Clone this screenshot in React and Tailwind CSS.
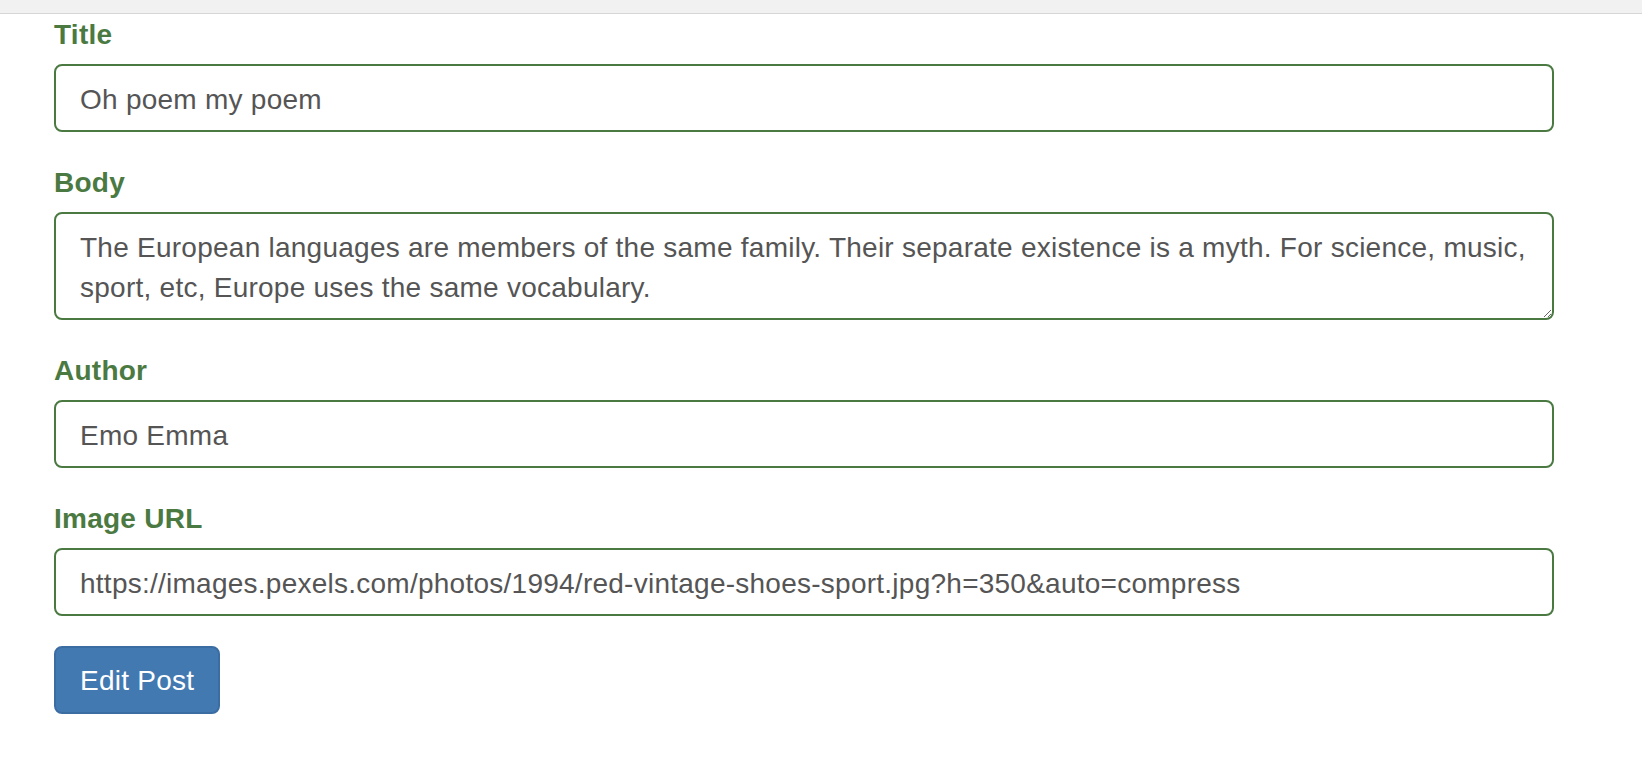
const fields = [
  { label: 'Title', value: 'Oh poem my poem' },
  {
    label: 'Body',
    value:
      'The European languages are members of the same family. Their separate existence is a myth. For science, music, sport, etc, Europe uses the same vocabulary.',
    multiline: true,
  },
  { label: 'Author', value: 'Emo Emma' },
  {
    label: 'Image URL',
    value: 'https://images.pexels.com/photos/1994/red-vintage-shoes-sport.jpg?h=350&auto=compress',
  },
];

const inputClass =
  'block w-full rounded-[8px] border-2 border-[#4a7a42] bg-white pl-[24px] pr-[22px] pt-[14px] pb-[10px] text-[28px] leading-[40px] tracking-[0.25px] text-[#555] outline-none';

export default function App() {
  return (
    <div className="min-h-screen bg-white font-['Liberation_Sans',Arial,sans-serif]">
      <div className="h-[14px] border-b border-[#d6d6d6] bg-[#f1f1f1]" />
      <form className="ml-[54px] w-[1500px]" onSubmit={(e) => e.preventDefault()}>
        {fields.map((f) => (
          <div key={f.label} className="mb-[30px]">
            <label className="mb-[9px] block pt-[1px] text-[28px] font-bold leading-[40px] tracking-[0.25px] text-[#4a7a42]">
              {f.label}
            </label>
            {f.multiline ? (
              <textarea rows={2} defaultValue={f.value} className={inputClass + ' h-[108px]'} />
            ) : (
              <input type="text" defaultValue={f.value} className={inputClass + ' h-[68px]'} />
            )}
          </div>
        ))}
        <button
          type="submit"
          className="rounded-[8px] border-2 border-[#3b6da3] bg-[#4379b1] px-[24px] pt-[13px] pb-[11px] text-[28px] leading-[40px] tracking-[0.25px] text-white"
        >
          Edit Post
        </button>
      </form>
    </div>
  );
}
